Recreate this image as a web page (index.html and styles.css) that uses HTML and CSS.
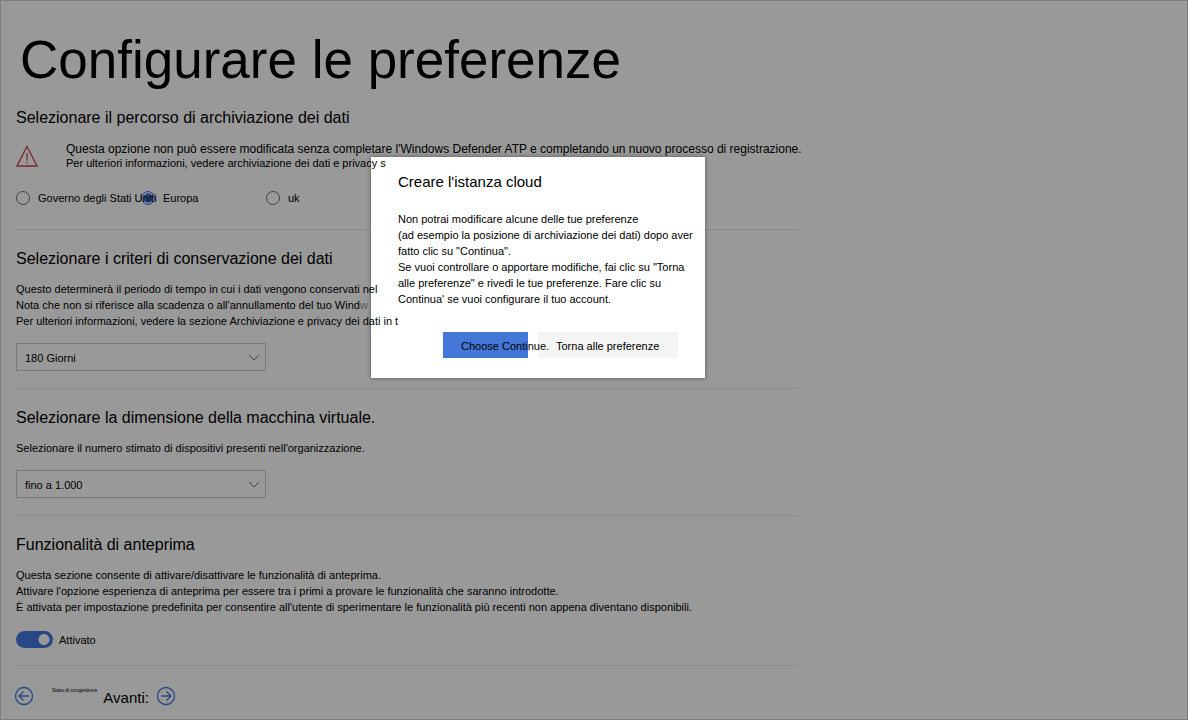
FILE: index.html
```html
<!DOCTYPE html>
<html lang="it">
<head>
<meta charset="utf-8">
<meta name="viewport" content="width=device-width, initial-scale=1">
<title>Configurare le preferenze</title>
<link rel="stylesheet" href="styles.css">
</head>
<body>
<main class="page">
  <h1 class="title">Configurare le preferenze</h1>
  <form class="form">
    <section class="section">
      <h2 class="heading">Selezionare il percorso di archiviazione dei dati</h2>
      <div class="warning">
        <svg class="warning-icon" viewBox="0 0 22 22" aria-hidden="true"><path d="M11 1.500 L21 21 H1 Z" fill="none" stroke="#782832" stroke-width="1.300"/><path d="M11 8 V15.500 M11 17 V18.500" stroke="#783c32" stroke-width="1.500"/></svg>
        <div class="warning-text">
          <p class="notice">Questa opzione non può essere modificata senza completare l'Windows Defender ATP e completando un nuovo processo di registrazione.</p>
          <p class="over">Per ulteriori informazioni, vedere archiviazione dei dati e privacy s</p>
        </div>
      </div>
      <div class="options">
        <label class="option"><input class="radio" type="radio" name="location"><span class="option-text">Governo degli Stati Uniti</span></label>
        <label class="option"><input class="radio" type="radio" name="location" checked><span class="option-text">Europa</span></label>
        <label class="option"><input class="radio" type="radio" name="location"><span class="option-text">uk</span></label>
      </div>
    </section>
    <section class="section">
      <h2 class="heading">Selezionare i criteri di conservazione dei dati</h2>
      <div class="lines over">
        <p>Questo determinerà il periodo di tempo in cui i dati vengono conservati nel</p>
        <p>Nota che non si riferisce alla scadenza o all'annullamento del tuo Wind<span class="faded">w</span></p>
        <p>Per ulteriori informazioni, vedere la sezione Archiviazione e privacy dei dati in t</p>
      </div>
      <div class="picker">
        <select class="select" aria-label="Conservazione dei dati"><option>180 Giorni</option></select>
        <svg class="chevron" viewBox="0 0 12 7" aria-hidden="true"><path d="M1 1 L6 6 L11 1"/></svg>
      </div>
    </section>
    <section class="section">
      <h2 class="heading">Selezionare la dimensione della macchina virtuale.</h2>
      <div class="lines"><p>Selezionare il numero stimato di dispositivi presenti nell'organizzazione.</p></div>
      <div class="picker">
        <select class="select" aria-label="Numero di dispositivi"><option>fino a 1.000</option></select>
        <svg class="chevron" viewBox="0 0 12 7" aria-hidden="true"><path d="M1 1 L6 6 L11 1"/></svg>
      </div>
    </section>
    <section class="section">
      <h2 class="heading">Funzionalità di anteprima</h2>
      <div class="lines">
        <p>Questa sezione consente di attivare/disattivare le funzionalità di anteprima.</p>
        <p>Attivare l'opzione esperienza di anteprima per essere tra i primi a provare le funzionalità che saranno introdotte.</p>
        <p>È attivata per impostazione predefinita per consentire all'utente di sperimentare le funzionalità più recenti non appena diventano disponibili.</p>
      </div>
      <label class="toggle"><input class="switch" type="checkbox" role="switch" checked><span>Attivato</span></label>
    </section>
    <nav class="steps">
      <button class="step" type="button" aria-label="Indietro"><svg class="arrow" viewBox="0 0 20 20" aria-hidden="true"><circle cx="10" cy="10" r="8.500"/><path d="M15 10 H5 M9.500 5.500 L5 10 L9.500 14.500"/></svg></button>
      <span class="back-text">Stato di congestione</span>
      <label class="next-text" for="next">Avanti:</label>
      <button class="step" id="next" type="button"><svg class="arrow" viewBox="0 0 20 20" aria-hidden="true"><circle cx="10" cy="10" r="8.500"/><path d="M5 10 H15 M10.500 5.500 L15 10 L10.500 14.500"/></svg></button>
    </nav>
  </form>
  <section class="dialog" role="dialog" aria-labelledby="dialog-title">
    <h2 class="dialog-title" id="dialog-title">Creare l'istanza cloud</h2>
    <p class="dialog-text">Non potrai modificare alcune delle tue preferenze<br>(ad esempio la posizione di archiviazione dei dati) dopo aver<br>fatto clic su "Continua".<br>Se vuoi controllare o apportare modifiche, fai clic su "Torna<br>alle preferenze" e rivedi le tue preferenze. Fare clic su<br>Continua' se vuoi configurare il tuo account.</p>
    <div class="actions">
      <button class="button primary" type="button">Choose Continue.</button>
      <button class="button" type="button">Torna alle preferenze</button>
    </div>
  </section>
</main>
</body>
</html>
```
FILE: styles.css
```css
* { box-sizing: border-box; }
body {
  margin: 0;
  background: #999999;
  color: #000000;
  font: 11px/16px "Liberation Sans", Arial, sans-serif;
}
h1, h2, p { margin: 0; font-weight: 400; }
.page {
  position: relative;
  min-height: 100vh;
  padding: 28px 15px 0;
  border: 1px solid #7d7d7d;
}
.title { font-size: 53px; line-height: 62px; padding-left: 4px; }
.form { max-width: 782px; padding-top: 18px; }
.section { padding-bottom: 17px; border-bottom: 1px solid #8c8c8c; }
.section + .section { padding-top: 20px; }
.heading { font-size: 16px; line-height: 18px; }
.warning { display: flex; align-items: center; gap: 28px; padding-top: 15px; }
.warning-icon { width: 22px; height: 22px; flex: none; }
.warning-text { line-height: 14px; white-space: nowrap; }
.notice { font-size: 12px; }
.over { position: relative; z-index: 2; }
.options { display: grid; grid-template-columns: repeat(3, 125px); padding: 20px 0 6px; }
.option { display: flex; align-items: center; gap: 8px; white-space: nowrap; }
.option-text { position: relative; z-index: 1; }
.radio {
  appearance: none;
  flex: none;
  width: 14px;
  height: 14px;
  margin: 0;
  border: 1px solid #444444;
  border-radius: 50%;
}
.radio:checked { border-color: #294784; background: radial-gradient(#294784 4px, #7c88a5 5px); }
.lines { padding-top: 13px; white-space: nowrap; }
.faded { color: #555555; }
.picker { display: grid; width: 250px; margin-top: 14px; align-items: center; }
.select {
  grid-area: 1 / 1;
  appearance: none;
  width: 100%;
  height: 28px;
  padding: 2px 8px 0;
  border: 1px solid #7a7a7a;
  border-radius: 0;
  background: transparent;
  color: #000000;
  font: inherit;
}
.chevron {
  grid-area: 1 / 1;
  justify-self: end;
  width: 12px;
  height: 7px;
  margin-right: 6px;
  pointer-events: none;
  fill: none;
  stroke: #444444;
}
.toggle { display: flex; align-items: center; gap: 6px; padding-top: 16px; }
.switch {
  appearance: none;
  width: 37px;
  height: 17px;
  margin: 0;
  border-radius: 9px;
  background: radial-gradient(circle at 28px 50%, #999999 5px, #294784 6px);
}
.steps { display: flex; align-items: center; margin-left: -2px; padding-top: 20px; }
.step { display: flex; padding: 0; border: 0; background: none; }
.arrow { width: 20px; height: 20px; fill: none; stroke: #294784; stroke-width: 1.3; }
.back-text { padding: 0 6px 12px 18px; font-size: 5px; line-height: 8px; }
.next-text { padding: 3px 7px 0 0; font-size: 15px; }
.dialog {
  position: absolute;
  z-index: 1;
  top: 156px;
  left: 370px;
  width: 334px;
  padding: 15px 0 20px 27px;
  background: #ffffff;
  box-shadow: 0 0 4px #555555;
}
.dialog-title { font-size: 15px; line-height: 20px; }
.dialog-text { padding-top: 19px; white-space: nowrap; }
.actions { display: flex; gap: 10px; padding: 25px 0 0 45px; }
.button {
  height: 26px;
  width: 140px;
  padding: 2px 0 0 18px;
  border: 0;
  background: #f4f4f4;
  color: #000000;
  font: inherit;
  text-align: left;
  white-space: nowrap;
}
.primary { position: relative; width: 85px; background: #4377d8; }
```
